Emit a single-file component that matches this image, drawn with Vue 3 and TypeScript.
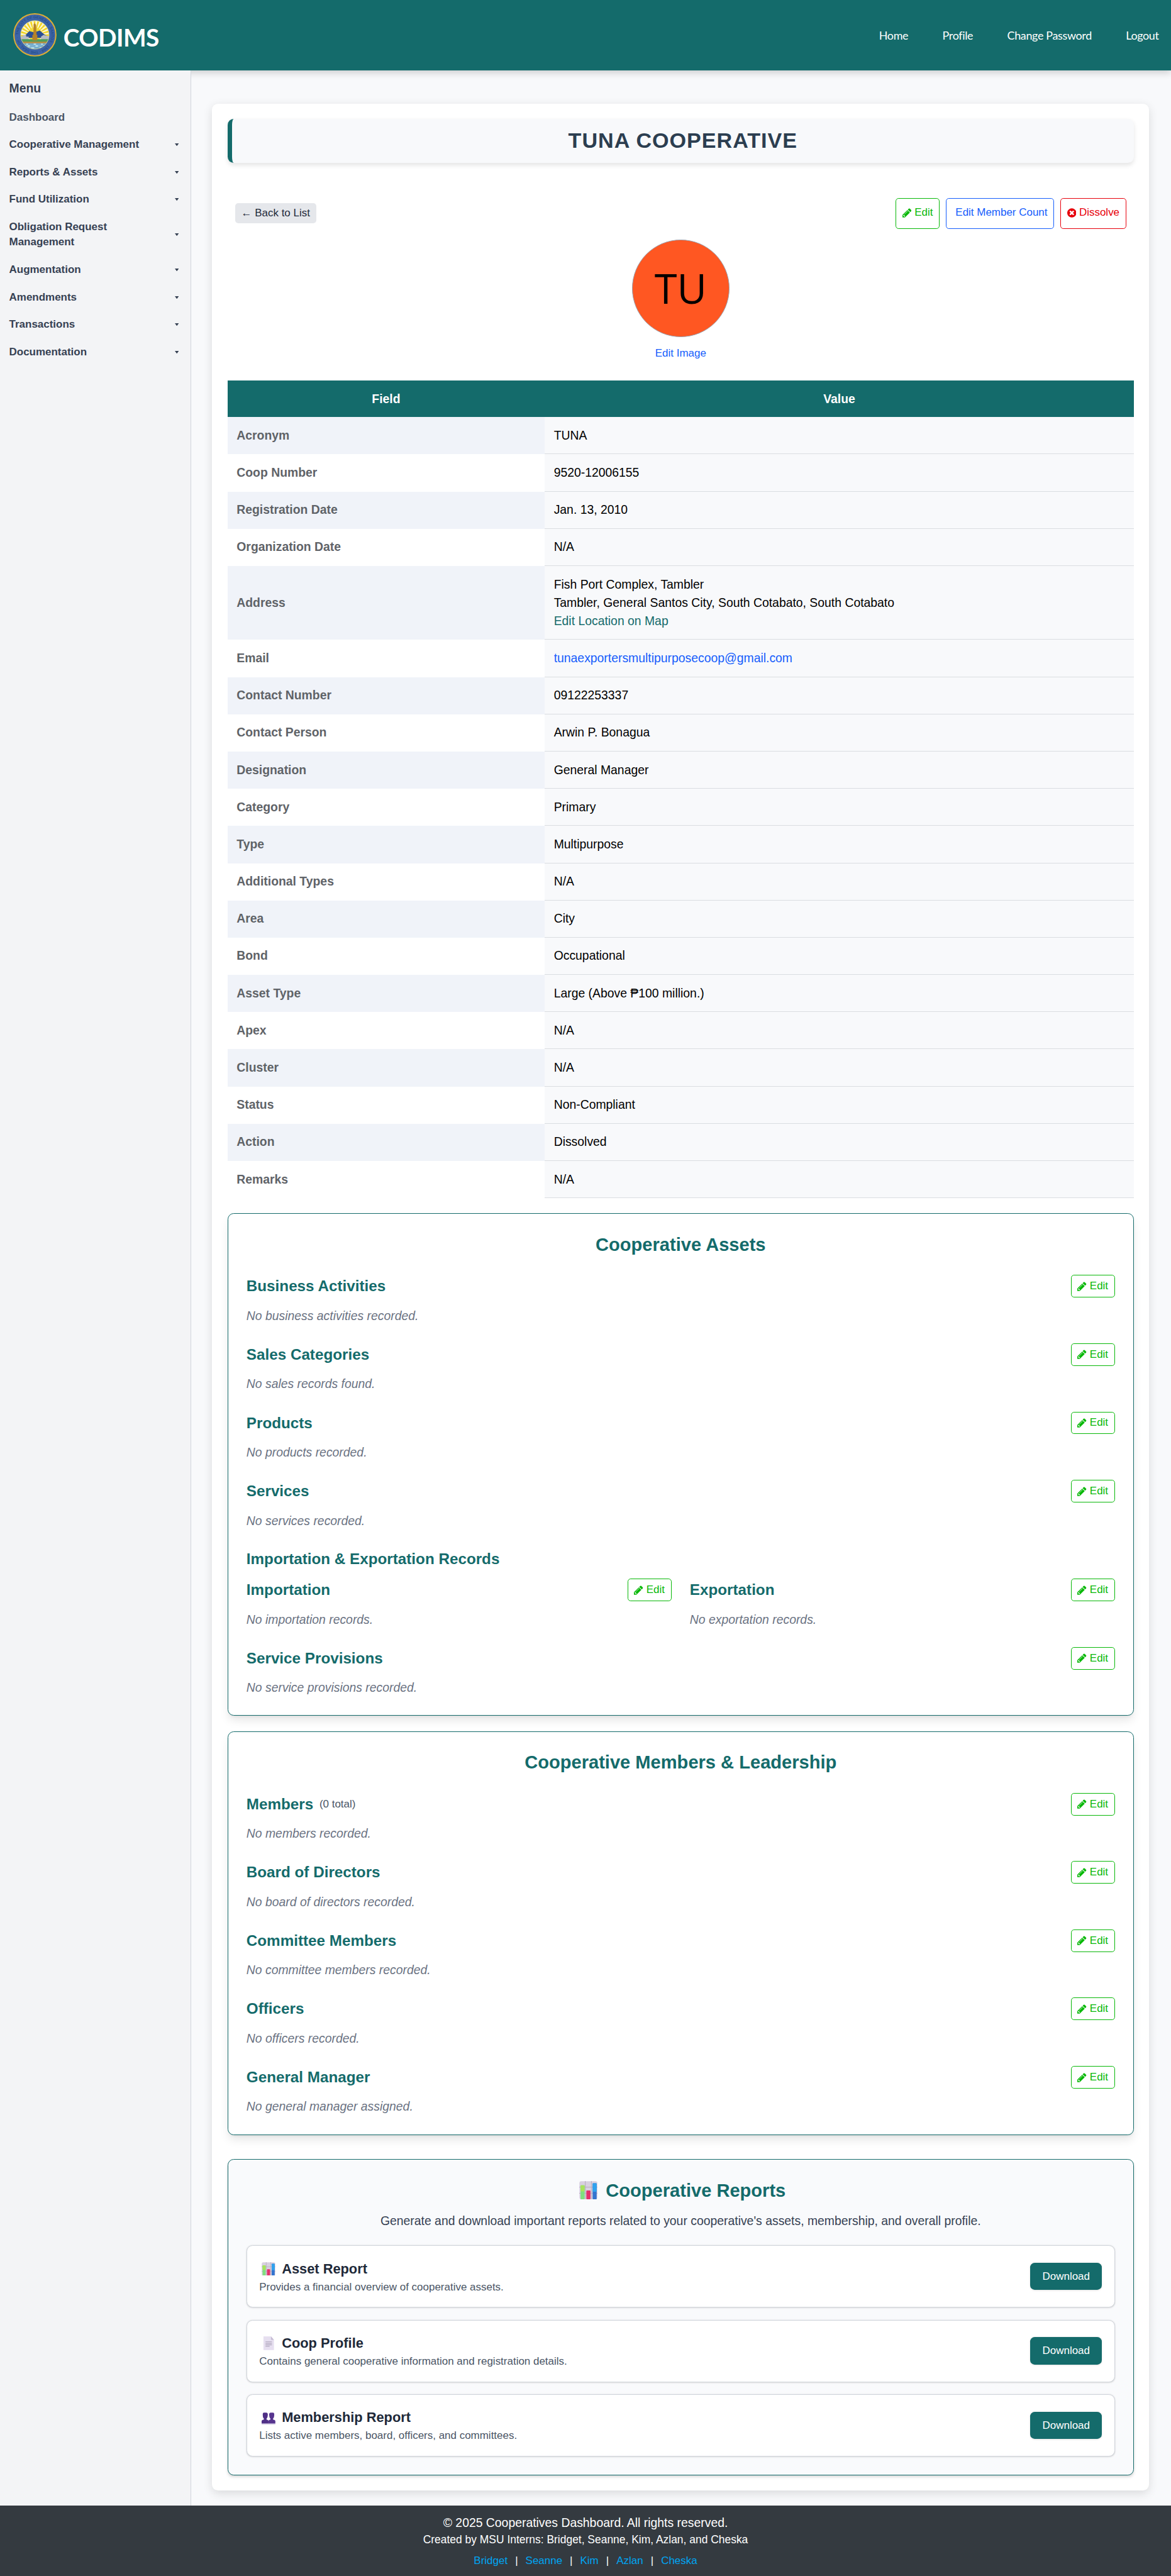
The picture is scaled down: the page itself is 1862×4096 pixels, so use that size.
<script setup lang="ts">
import { h, type FunctionalComponent } from 'vue'

interface Field { label: string; lines: string[]; link?: string; email?: boolean }
interface Section { title: string; empty: string; note?: string }
interface Report { icon: 'chart' | 'page' | 'people'; title: string; text: string }

const nav = ['Home', 'Profile', 'Change Password', 'Logout']

const menu = [
  'Cooperative Management',
  'Reports & Assets',
  'Fund Utilization',
  'Obligation Request Management',
  'Augmentation',
  'Amendments',
  'Transactions',
  'Documentation',
]

const fields: Field[] = [
  { label: 'Acronym', lines: ['TUNA'] },
  { label: 'Coop Number', lines: ['9520-12006155'] },
  { label: 'Registration Date', lines: ['Jan. 13, 2010'] },
  { label: 'Organization Date', lines: ['N/A'] },
  {
    label: 'Address',
    lines: ['Fish Port Complex, Tambler', 'Tambler, General Santos City, South Cotabato, South Cotabato'],
    link: 'Edit Location on Map',
  },
  { label: 'Email', lines: ['tunaexportersmultipurposecoop@gmail.com'], email: true },
  { label: 'Contact Number', lines: ['09122253337'] },
  { label: 'Contact Person', lines: ['Arwin P. Bonagua'] },
  { label: 'Designation', lines: ['General Manager'] },
  { label: 'Category', lines: ['Primary'] },
  { label: 'Type', lines: ['Multipurpose'] },
  { label: 'Additional Types', lines: ['N/A'] },
  { label: 'Area', lines: ['City'] },
  { label: 'Bond', lines: ['Occupational'] },
  { label: 'Asset Type', lines: ['Large (Above ₱100 million.)'] },
  { label: 'Apex', lines: ['N/A'] },
  { label: 'Cluster', lines: ['N/A'] },
  { label: 'Status', lines: ['Non-Compliant'] },
  { label: 'Action', lines: ['Dissolved'] },
  { label: 'Remarks', lines: ['N/A'] },
]

const assets: Section[] = [
  { title: 'Business Activities', empty: 'No business activities recorded.' },
  { title: 'Sales Categories', empty: 'No sales records found.' },
  { title: 'Products', empty: 'No products recorded.' },
  { title: 'Services', empty: 'No services recorded.' },
]

const trade: Section[] = [
  { title: 'Importation', empty: 'No importation records.' },
  { title: 'Exportation', empty: 'No exportation records.' },
]

const provisions: Section = { title: 'Service Provisions', empty: 'No service provisions recorded.' }

const people: Section[] = [
  { title: 'Members', note: '(0 total)', empty: 'No members recorded.' },
  { title: 'Board of Directors', empty: 'No board of directors recorded.' },
  { title: 'Committee Members', empty: 'No committee members recorded.' },
  { title: 'Officers', empty: 'No officers recorded.' },
  { title: 'General Manager', empty: 'No general manager assigned.' },
]

const reports: Report[] = [
  { icon: 'chart', title: 'Asset Report', text: 'Provides a financial overview of cooperative assets.' },
  { icon: 'page', title: 'Coop Profile', text: 'Contains general cooperative information and registration details.' },
  { icon: 'people', title: 'Membership Report', text: 'Lists active members, board, officers, and committees.' },
]

const interns = ['Bridget', 'Seanne', 'Kim', 'Azlan', 'Cheska']

const rays = Array.from({ length: 13 }, (_, i) => -180 + i * 15)

const iconStyle = { width: '0.857em', height: '1em', fill: 'currentColor', flex: 'none', display: 'block' }

const Pencil: FunctionalComponent = () =>
  h('svg', { viewBox: '0 0 1536 1792', style: iconStyle }, [
    h('path', {
      d: 'M363 1536l91-91-235-235-91 91v107h128v128h107zM886 608q0-22-22-22-10 0-17 7l-542 542q-7 7-7 17 0 22 22 22 10 0 17-7l542-542q7-7 7-17zM832 416l416 416-832 832H0v-416zm683 96q0 53-37 90l-166 166-416-416 166-165q36-38 90-38 53 0 91 38l235 234q37 39 37 91z',
    }),
  ])

const Chart: FunctionalComponent = () =>
  h('svg', { viewBox: '0 0 30 30' }, [
    h('rect', { x: 0.3, y: 0.3, width: 29.4, height: 29.4, rx: 3, fill: '#d8d0e0' }),
    h('path', { d: 'M10 0v30M20 0v30M0 10h30M0 20h30', stroke: '#b3aabd', 'stroke-width': 1, fill: 'none' }),
    h('rect', { x: 2.2, y: 7, width: 6.6, height: 23, rx: 1, fill: '#7fe07f' }),
    h('rect', { x: 2.2, y: 7, width: 6.6, height: 10, rx: 1, fill: '#a8e35c' }),
    h('rect', { x: 11.7, y: 15.5, width: 6.8, height: 14.5, rx: 1, fill: '#e5306c' }),
    h('rect', { x: 22, y: 3.6, width: 6.6, height: 26.4, rx: 1, fill: '#3474cf' }),
    h('rect', { x: 22, y: 3.6, width: 6.6, height: 14, rx: 1, fill: '#30a2ee' }),
  ])

const Page: FunctionalComponent = () =>
  h('svg', { viewBox: '0 0 30 30' }, [
    h('path', { d: 'M4 0h16.5L27 7.5V30H4z', fill: '#e6dff0' }),
    h('path', { d: 'M20.5 0v7.5H27z', fill: '#c6bcd4' }),
    h('path', { d: 'M8.5 12h14M8.5 15.4h14M8.5 18.6h14M8.5 21.8h9', stroke: '#a99fb5', 'stroke-width': 1.4, fill: 'none' }),
  ])

const People: FunctionalComponent = () =>
  h('svg', { viewBox: '0 0 30 30' }, [
    h('path', {
      d: 'M2.5 9.5Q2 5 5 4.500h5q4 .5 3.500 5l-.5 4q-.6 3-2.300 4v2q4 .7 4.300 3V28H0v-5.500Q.5 20 5 19.500v-2q-1.700-1-2.200-4z',
      fill: '#4f2f86',
    }),
    h('path', {
      d: 'M16.500 9.500Q16 5 20 4.500h5q3 .5 2.600 5L27.200 13.500q-.5 3-2.200 4v2q4.500.5 5 3V28H15v-5.500q.4-2.300 4.300-3v-2q-1.700-1-2.300-4z',
      fill: '#57358f',
    }),
    h('path', { d: 'M0 28h30v1.500H0z', fill: '#8a75b5' }),
  ])

const reportIcons = { chart: Chart, page: Page, people: People }
</script>

<template>
  <div class="page">
    <header class="topbar">
      <div class="brand">
        <svg class="seal" viewBox="0 0 70 70">
          <defs>
            <clipPath id="seal-inner"><circle cx="35" cy="35" r="23" /></clipPath>
            <path id="seal-top" d="M8.500 35a26.500 26.500 0 1 1 53 0a26.500 26.500 0 1 1-53 0" />
          </defs>
          <circle cx="35" cy="35" r="34" fill="#3d64a8" stroke="#dfae33" stroke-width="2" />
          <text class="seal-text"><textPath href="#seal-top">THE CITY OF GENERAL SANTOS · 1968 · THE SEAL OF ·</textPath></text>
          <g clip-path="url(#seal-inner)">
            <rect x="12" y="12" width="46" height="46" fill="#fbf7cf" />
            <path
              v-for="a in rays"
              :key="a"
              d="M35 35.500L58 34v3z"
              fill="#f2d321"
              :transform="`rotate(${a} 35 36)`"
            />
            <circle cx="35" cy="34" r="11" fill="#f4da35" />
            <path d="M10 40l10-5 6-6 8 2 9-3 7 6 10 6z" fill="#2c4f94" />
            <path d="M12 37h4v-2h5v3h4v5H12zM45 38l4-3 4 1 5 1v6H45z" fill="#b9bcc4" />
            <path d="M11 42h48v5H11z" fill="#4fa05c" />
            <path d="M11 46h48v3H11z" fill="#b98a3c" />
            <path d="M11 48.500h48V60H11z" fill="#a8d4e6" />
            <path d="M12 50h9m3 0h9m4 0h8m3 0h9M15 53h8m4 0h9m4 0h9M20 56h9m5 0h9" stroke="#3b7fb0" stroke-width="1.200" />
            <path d="M33 18l2-2 2 3 .8 16h1.200v9h-8v-9h1.500z" fill="#b5822a" />
          </g>
          <circle cx="35" cy="35" r="23" fill="none" stroke="#d9d58f" stroke-width=".8" />
        </svg>
        <span class="brand-name">CODIMS</span>
      </div>
      <nav class="topnav">
        <a v-for="item in nav" :key="item">{{ item }}</a>
      </nav>
    </header>

    <div class="body">
      <aside class="sidebar">
        <h2>Menu</h2>
        <a class="dash">Dashboard</a>
        <div v-for="item in menu" :key="item" class="menu-item">
          <span>{{ item }}</span>
          <svg class="caret" viewBox="0 0 6 4"><path d="M0 0h6L3 4z" /></svg>
        </div>
      </aside>

      <main class="card">
        <h1 class="title">TUNA COOPERATIVE</h1>

        <div class="toolbar">
          <a class="back">← Back to List</a>
          <div class="actions">
            <a class="btn big green"><Pencil /><span>Edit</span></a>
            <a class="btn big blue"><span>Edit Member Count</span></a>
            <a class="btn big red">
              <svg class="times" viewBox="0 0 1536 1792">
                <path
                  d="M1149 1122q0-26-19-45l-181-181 181-181q19-19 19-45 0-27-19-46l-90-90q-19-19-46-19-26 0-45 19l-181 181-181-181q-19-19-45-19-27 0-46 19l-90 90q-19 19-19 46 0 26 19 45l181 181-181 181q-19 19-19 45 0 27 19 46l90 90q19 19 46 19 26 0 45-19l181-181 181 181q19 19 45 19 27 0 46-19l90-90q19-19 19-46zm387-226q0 209-103 385.500t-279.500 279.500-385.500 103-385.500-103-279.500-279.500-103-385.500 103-385.500 279.500-279.500 385.500-103 385.500 103 279.500 279.500 103 385.500z"
                />
              </svg>
              <span>Dissolve</span>
            </a>
          </div>
        </div>

        <div class="profile">
          <div class="avatar">TU</div>
          <a class="edit-image">Edit Image</a>
        </div>

        <table class="details">
          <thead>
            <tr><th>Field</th><th>Value</th></tr>
          </thead>
          <tbody>
            <tr v-for="f in fields" :key="f.label">
              <td class="label">{{ f.label }}</td>
              <td class="value" :class="{ email: f.email }">
                <div v-for="l in f.lines" :key="l">{{ l }}</div>
                <a v-if="f.link" class="map">{{ f.link }}</a>
              </td>
            </tr>
          </tbody>
        </table>

        <section class="panel">
          <h2>Cooperative Assets</h2>
          <div v-for="s in assets" :key="s.title" class="block">
            <div class="block-head">
              <h3>{{ s.title }}</h3>
              <a class="btn green"><Pencil /><span>Edit</span></a>
            </div>
            <p class="empty">{{ s.empty }}</p>
          </div>
          <div class="block">
            <h3 class="group">Importation &amp; Exportation Records</h3>
            <div class="columns">
              <div v-for="s in trade" :key="s.title">
                <div class="block-head">
                  <h3>{{ s.title }}</h3>
                  <a class="btn green"><Pencil /><span>Edit</span></a>
                </div>
                <p class="empty">{{ s.empty }}</p>
              </div>
            </div>
          </div>
          <div class="block">
            <div class="block-head">
              <h3>{{ provisions.title }}</h3>
              <a class="btn green"><Pencil /><span>Edit</span></a>
            </div>
            <p class="empty">{{ provisions.empty }}</p>
          </div>
        </section>

        <section class="panel">
          <h2>Cooperative Members &amp; Leadership</h2>
          <div v-for="s in people" :key="s.title" class="block">
            <div class="block-head">
              <div class="with-note">
                <h3>{{ s.title }}</h3>
                <span v-if="s.note" class="note">{{ s.note }}</span>
              </div>
              <a class="btn green"><Pencil /><span>Edit</span></a>
            </div>
            <p class="empty">{{ s.empty }}</p>
          </div>
        </section>

        <section class="panel reports">
          <h2 class="reports-title"><span class="emoji"><Chart /></span>Cooperative Reports</h2>
          <p class="lead">
            Generate and download important reports related to your cooperative's assets, membership, and overall profile.
          </p>
          <div class="report-list">
            <div v-for="r in reports" :key="r.title" class="report">
              <div>
                <h3><span class="emoji"><component :is="reportIcons[r.icon]" /></span>{{ r.title }}</h3>
                <p>{{ r.text }}</p>
              </div>
              <a class="download">Download</a>
            </div>
          </div>
        </section>
      </main>
    </div>

    <footer class="footer">
      <p class="copy">© 2025 Cooperatives Dashboard. All rights reserved.</p>
      <p class="made">Created by MSU Interns: Bridget, Seanne, Kim, Azlan, and Cheska</p>
      <div class="interns">
        <template v-for="(name, i) in interns" :key="name">
          <span v-if="i">|</span>
          <a>{{ name }}</a>
        </template>
      </div>
    </footer>
  </div>
</template>

<style>
body {
  margin: 0;
  background: #f8f9fb;
}
</style>

<style scoped>
.page {
  zoom: 0.9698;
  display: flex;
  flex-direction: column;
  width: 1920px;
  min-height: 4223.5px;
  overflow: hidden;
  font-family: Arial, 'Liberation Sans', sans-serif;
  font-size: 20px;
  line-height: 1.5;
  color: #000;
  background: #f8f9fb;
}
h1, h2, h3, p {
  margin: 0;
}
* {
  box-sizing: border-box;
}

.topbar {
  display: flex;
  flex: none;
  align-items: center;
  justify-content: space-between;
  height: 115px;
  padding: 0 20px 0 22px;
  background: #146b6b;
  box-shadow: 0 5px 10px rgba(0, 0, 0, 0.15);
  color: #fff;
  font-family: Lato, sans-serif;
}
.brand {
  display: flex;
  align-items: center;
}
.seal {
  width: 71px;
  height: 71px;
}
.seal-text {
  font: 700 6px 'Liberation Sans', sans-serif;
  fill: #27508a;
}
.brand-name {
  margin-left: 11px;
  padding-top: 7px;
  font-size: 40px;
  font-weight: 700;
  line-height: 48px;
  letter-spacing: -0.6px;
}
.topnav {
  display: flex;
  gap: 56px;
  padding-top: 2px;
  font-size: 18.5px;
  letter-spacing: -0.35px;
}

.body {
  display: flex;
  flex: none;
  align-items: stretch;
}
.sidebar {
  position: relative;
  width: 313px;
  flex: none;
  padding: 15px 19px 0 15px;
  background: #f3f4f6;
  border-right: 1px solid #d1d5dc;
  color: #364153;
  font-size: 17.5px;
  font-weight: 700;
  line-height: 25px;
}
.sidebar h2 {
  font-size: 20px;
  line-height: 30px;
}
.dash {
  display: block;
  margin-top: 20px;
  color: #4a5565;
}
.menu-item {
  display: flex;
  align-items: center;
  justify-content: space-between;
  margin-top: 20px;
}
.menu-item span {
  max-width: 230px;
}
.caret {
  width: 6.5px;
  height: 4.5px;
  fill: #364153;
}

.card {
  width: 1536px;
  margin: 55px 36px 25px 35px;
  padding: 25px;
  background: #fff;
  border-radius: 10px;
  box-shadow: 0 5px 15px rgba(0, 0, 0, 0.12);
}
.title {
  height: 72px;
  border-left: 7.3px solid #146b6b;
  border-radius: 10px;
  background: #f8f9fb;
  box-shadow: 0 4px 8px rgba(0, 0, 0, 0.1);
  color: #2c3e50;
  font-size: 35.2px;
  line-height: 71px;
  letter-spacing: 1px;
  text-align: center;
}
.toolbar {
  display: flex;
  align-items: center;
  justify-content: space-between;
  height: 50px;
  margin-top: 58px;
  padding: 0 12.5px;
}
.back {
  height: 33px;
  padding: 0 10px;
  border-radius: 5px;
  background: #e5e7eb;
  color: #1e2939;
  font-size: 17.5px;
  line-height: 32px;
}
.actions {
  display: flex;
  gap: 10px;
}
.btn {
  display: flex;
  align-items: center;
  gap: 5px;
  height: 37px;
  padding: 0 10px;
  border: 1px solid;
  border-radius: 5px;
  font-size: 17.5px;
  line-height: 25px;
  background: #fff;
}
.btn.big {
  height: 50px;
  padding-bottom: 2px;
}
.green {
  color: #08b808;
}
.blue {
  padding-left: 15px;
  color: #155dfc;
}
.red {
  color: #e7000b;
}
.times {
  width: 0.857em;
  height: 1em;
  fill: currentColor;
}
.profile {
  display: flex;
  flex-direction: column;
  align-items: center;
  height: 249px;
  padding-top: 18px;
}
.avatar {
  width: 160px;
  height: 160px;
  flex: none;
  border: 1px solid #99a1af;
  border-radius: 50%;
  background: #ff5722;
  font-family: 'Open Sans', sans-serif;
  font-size: 67px;
  line-height: 158px;
  text-align: center;
}
.edit-image {
  margin-top: 14px;
  color: #155dfc;
  font-size: 17.5px;
  line-height: 25px;
}

.details {
  width: 1486px;
  border-collapse: separate;
  border-spacing: 0;
  table-layout: fixed;
}
.details th {
  padding: 15px;
  background: #146b6b;
  color: #fff;
  line-height: 30px;
}
.details th:first-child {
  width: 35%;
}
.details td {
  padding: 15px 15px 16px;
  line-height: 30px;
}
.details .label {
  color: #5f6368;
  font-weight: 700;
}
.details tr:nth-child(odd) .label {
  background: #f0f3f9;
}
.details .value {
  padding-bottom: 15px;
  border-bottom: 1px solid #dadde1;
  background: #f8f9fb;
}
.details .email {
  color: #155dfc;
}
.map {
  display: block;
  color: #146b6b;
}

.panel {
  margin-top: 25px;
  padding: 30px;
  border: 1px solid #146b6b;
  border-radius: 10px;
  background: #fff;
  box-shadow: 0 10px 15px -3px rgba(0, 0, 0, 0.1), 0 4px 6px -4px rgba(0, 0, 0, 0.1);
}
.panel > h2 {
  color: #146b6b;
  font-size: 30px;
  line-height: 40px;
  text-align: center;
}
.block {
  margin-top: 30px;
}
.block-head {
  display: flex;
  align-items: center;
  justify-content: space-between;
  height: 37px;
  margin-bottom: 15px;
}
.block h3 {
  color: #146b6b;
  font-size: 25px;
  line-height: 35px;
}
.block .group {
  margin-bottom: 15px;
}
.columns {
  display: grid;
  grid-template-columns: 1fr 1fr;
  gap: 30px;
}
.empty {
  color: #6a7282;
  font-style: italic;
}
.with-note {
  display: flex;
  align-items: center;
  gap: 10px;
}
.note {
  color: #4a5565;
  font-size: 17.5px;
  line-height: 25px;
}

.reports {
  margin-top: 40px;
  background: #f9fafc;
  box-shadow: 0 4px 6px -1px rgba(0, 0, 0, 0.1), 0 2px 4px -2px rgba(0, 0, 0, 0.1);
}
.reports-title {
  display: flex;
  align-items: center;
  justify-content: center;
}
.emoji {
  display: flex;
  width: 1.37em;
  margin-right: 0.278em;
  justify-content: center;
}
.emoji svg {
  width: 1em;
  height: 1em;
  flex: none;
}
.lead {
  margin-top: 15px;
  color: #364153;
  text-align: center;
}
.report-list {
  display: flex;
  flex-direction: column;
  gap: 20px;
  margin-top: 25px;
}
.report {
  display: flex;
  align-items: center;
  justify-content: space-between;
  padding: 20px;
  border: 1px solid #d1d5dc;
  border-radius: 10px;
  background: #fff;
  box-shadow: 0 1px 3px rgba(0, 0, 0, 0.1), 0 1px 2px -1px rgba(0, 0, 0, 0.1);
}
.report h3 {
  display: flex;
  align-items: center;
  color: #1e2939;
  font-size: 22.5px;
  line-height: 35px;
}
.report p {
  color: #4a5565;
  font-size: 17.5px;
  line-height: 25px;
}
.download {
  height: 45px;
  padding: 0 20px;
  border-radius: 7.5px;
  background: #146b6b;
  box-shadow: 0 1px 3px rgba(0, 0, 0, 0.12);
  color: #fff;
  font-size: 17.5px;
  line-height: 45px;
}

.footer {
  flex: 1;
  padding-top: 12.5px;
  background: #343a40;
  color: #fff;
  text-align: center;
}
.made {
  font-size: 18px;
  line-height: 25px;
}
.interns {
  display: flex;
  justify-content: center;
  gap: 12.4px;
  margin-top: 10px;
  font-size: 17.5px;
  line-height: 25px;
}
.interns a {
  color: #00a6f4;
}
</style>
